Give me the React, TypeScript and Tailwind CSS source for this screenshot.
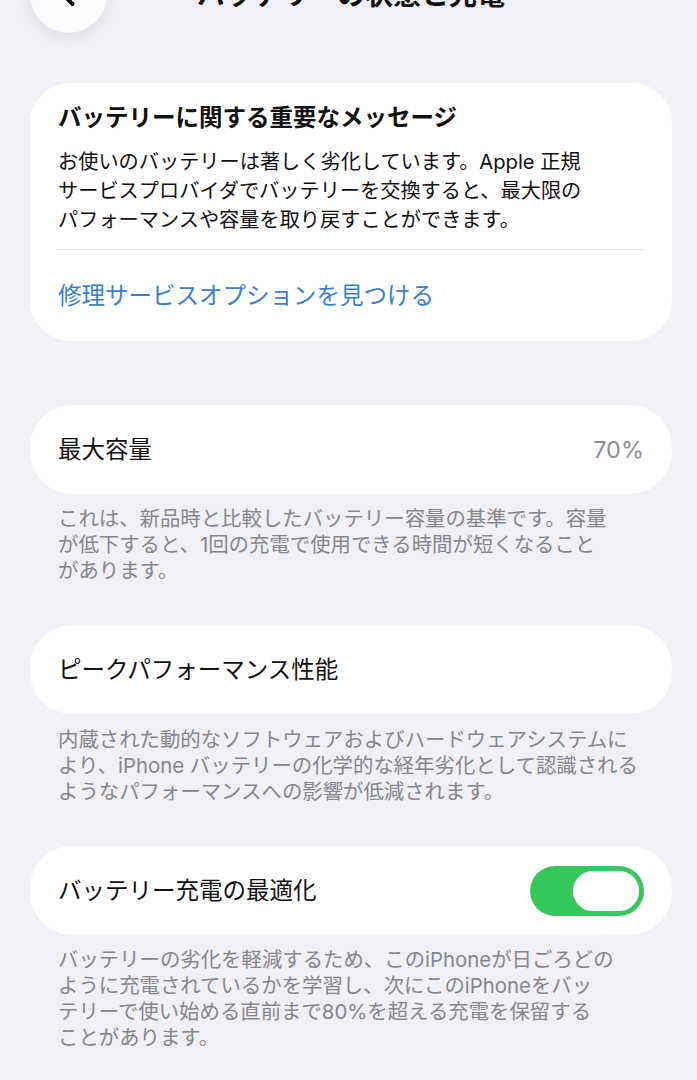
import React from "react";
import { ChevronLeft } from "lucide-react";

const font = { fontFamily: "Inter, 'Noto Sans CJK JP', sans-serif" };

const Footer = ({ lines, className = "" }: { lines: string[]; className?: string }) => (
  <p className={`px-[28px] text-[20.4px] leading-[26px] text-[#86868b] whitespace-nowrap ${className}`}>
    {lines.map((l, i) => (
      <React.Fragment key={i}>
        {l}
        {i < lines.length - 1 && <br />}
      </React.Fragment>
    ))}
  </p>
);

const Row = ({ children, className = "" }: { children: React.ReactNode; className?: string }) => (
  <div className={`h-[89px] rounded-[42px] bg-white px-[28px] flex items-center justify-between ${className}`}>
    {children}
  </div>
);

const App = () => {
  return (
    <main className="min-h-[1080px] w-[697px] overflow-hidden bg-[#f0f0f5] text-[#111]" style={font}>
      {/* nav bar, mostly scrolled off the top */}
      <header className="-mt-[44px] h-[77px] grid grid-cols-[77px_1fr_77px] items-center pl-[30px] pr-[25px]">
        <div className="w-[77px] h-[77px] rounded-full bg-[#fbfbfd] shadow-[0_4px_14px_rgba(0,0,0,0.08)] flex items-center justify-center">
          <ChevronLeft size={36} strokeWidth={2.6} className="text-black -ml-[2px]" />
        </div>
        <h1 className="text-center text-[28px] font-bold leading-[34px]">バッテリーの状態と充電</h1>
        <div />
      </header>

      <section className="pl-[30px] pr-[25px]">
        <div className="mt-[50px] rounded-[40px] bg-white px-[28px] pt-[19px] pb-[29px]">
          <h2 className="text-[23.5px] font-bold leading-[32px]">バッテリーに関する重要なメッセージ</h2>
          <p className="mt-[13px] text-[20.2px] leading-[29px] whitespace-nowrap">
            お使いのバッテリーは著しく劣化しています。Apple 正規
            <br />
            サービスプロバイダでバッテリーを交換すると、最大限の
            <br />
            パフォーマンスや容量を取り戻すことができます。
          </p>
          <div className="mt-[15px] h-px bg-[#e3e3e7]" />
          <a className="mt-[30px] block text-[23.5px] leading-[32px] text-[#3a7fcf]">修理サービスオプションを見つける</a>
        </div>

        <Row className="mt-[64px]">
          <span className="text-[23.5px]">最大容量</span>
          <span className="text-[23.5px] text-[#8e8e93]">70%</span>
        </Row>
        <Footer
          className="mt-[12px]"
          lines={[
            "これは、新品時と比較したバッテリー容量の基準です。容量",
            "が低下すると、1回の充電で使用できる時間が短くなること",
            "があります。",
          ]}
        />

        <Row className="mt-[41px]">
          <span className="text-[23.5px]">ピークパフォーマンス性能</span>
        </Row>
        <Footer
          className="mt-[13px]"
          lines={[
            "内蔵された動的なソフトウェアおよびハードウェアシステムに",
            "より、iPhone バッテリーの化学的な経年劣化として認識される",
            "ようなパフォーマンスへの影響が低減されます。",
          ]}
        />

        <Row className="mt-[41px]">
          <span className="text-[23.5px]">バッテリー充電の最適化</span>
          <div className="w-[114px] h-[50px] rounded-full bg-[#34c759] flex items-center justify-end pr-[3px]">
            <div className="w-[70px] h-[44px] rounded-full bg-white border-[2px] border-[#3cc862]" />
          </div>
        </Row>
        <Footer
          className="mt-[12px]"
          lines={[
            "バッテリーの劣化を軽減するため、このiPhoneが日ごろどの",
            "ように充電されているかを学習し、次にこのiPhoneをバッ",
            "テリーで使い始める直前まで80%を超える充電を保留する",
            "ことがあります。",
          ]}
        />
      </section>
    </main>
  );
};

export default App;
